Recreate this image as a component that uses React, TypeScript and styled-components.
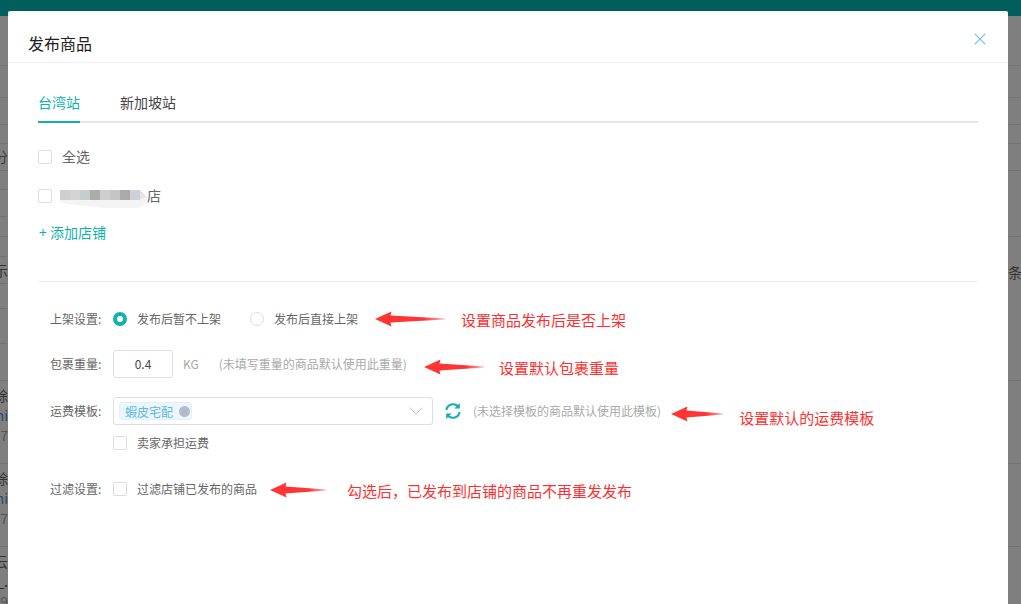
import React from "react";
import styled, { createGlobalStyle } from "styled-components";
import { X, ChevronDown } from "lucide-react";

const CJK = `"Noto Sans CJK SC", "Noto Sans", sans-serif`;
const TEAL = "#10b2ac";

const GlobalStyle = createGlobalStyle`
  html, body {
    margin: 0;
    padding: 0;
    height: 100%;
    overflow: hidden;
    background: #7f7f7f;
    font-family: ${CJK};
  }
`;

const Page = styled.div`
  position: relative;
  width: 1021px;
  height: 604px;
  overflow: hidden;
`;

const TopBar = styled.div`
  height: 16px;
  background: #005e5c;
`;

const BackRow = styled.div<{ $h: number; $leftOnly?: boolean }>`
  height: ${({ $h }) => $h}px;
  box-sizing: border-box;
  border-bottom: 1px solid #737373;
  ${({ $leftOnly }) =>
    $leftOnly
      ? "border-image: linear-gradient(to right, #737373 8px, transparent 8px) 1;"
      : ""}
  display: flex;
  justify-content: space-between;
  align-items: center;
`;

const SideLeft = styled.div<{ $lift?: number }>`
  width: 8px;
  overflow: hidden;
  display: flex;
  flex-direction: column;
  align-items: flex-end;
  margin-bottom: ${({ $lift }) => $lift || 0}px;
  font-size: 14px;
  line-height: 20px;
  color: #333;
`;

const SideRight = styled.div`
  width: 13px;
  overflow: hidden;
  margin-top: 4px;
  font-size: 14px;
  line-height: 20px;
  color: #333;
  white-space: nowrap;
`;

const SideLine = styled.span<{ $tone?: string }>`
  white-space: nowrap;
  color: ${({ $tone }) => $tone || "#333"};
`;

const Modal = styled.div`
  position: absolute;
  left: 8px;
  top: 11px;
  width: 1000px;
  height: 620px;
  background: #fff;
  border-radius: 2px;
`;

const ModalHeader = styled.div`
  height: 52px;
  box-sizing: border-box;
  border-bottom: 1px solid #eeeef4;
  padding: 12px 20px 0;
  display: flex;
  align-items: center;
  justify-content: space-between;
  font-size: 16px;
  color: #222;
`;

const CloseBtn = styled.div`
  display: flex;
  margin: -8px -2px 0 0;
  color: #7cc4ee;
`;

const ModalBody = styled.div`
  padding: 22px 30px 0;
`;

const Tabs = styled.div`
  display: flex;
  gap: 40px;
  height: 38px;
  box-sizing: border-box;
  border-bottom: 2px solid #e6e6ee;
`;

const Tab = styled.div<{ $active?: boolean }>`
  height: 38px;
  box-sizing: border-box;
  padding-top: 6px;
  font-size: 14px;
  line-height: 22px;
  color: ${({ $active }) => ($active ? TEAL : "#444")};
  border-bottom: 2px solid ${({ $active }) => ($active ? TEAL : "transparent")};
`;

const ShopRow = styled.div<{ $top: number }>`
  display: flex;
  align-items: center;
  height: 14px;
  margin-top: ${({ $top }) => $top}px;
  font-size: 14px;
  color: #666;
`;

const ShopLabel = styled.span`
  margin: -2px 0 0 10px;
`;

const ShopSuffix = styled.span`
  margin-top: -2px;
`;

const Box = styled.span`
  display: block;
  width: 14px;
  height: 14px;
  flex: none;
  box-sizing: border-box;
  border: 1px solid #dddde6;
  border-radius: 2px;
  background: #fff;
`;

const Mosaic = styled.div`
  position: relative;
  display: flex;
  width: 88px;
  height: 14px;
  box-sizing: border-box;
  padding-top: 1px;
  margin-left: 8px;
  margin-right: -1px;
`;

const MosaicCell = styled.span<{ $c: string }>`
  width: 10px;
  height: 10px;
  background: ${({ $c }) => $c};
`;

const Smear = styled.svg`
  position: absolute;
  left: 0;
  top: 1px;
`;

const AddShop = styled.div`
  margin-top: 21px;
  padding-left: 1px;
  font-size: 14px;
  line-height: 16px;
  color: ${TEAL};
`;

const Divider = styled.div`
  height: 1px;
  background: #eeeef2;
  margin-top: 41px;
`;

const Form = styled.div`
  padding: 23px 0 0 12px;
`;

const FormRow = styled.div<{ $gap?: number }>`
  display: flex;
  align-items: center;
  height: 28px;
  margin-top: ${({ $gap }) => $gap || 0}px;
  font-size: 12px;
  color: #666;
  white-space: nowrap;
`;

const FormLabel = styled.div`
  width: 63px;
  flex: none;
  margin-top: -2px;
  color: #666;
`;

const Radio = styled.span<{ $on?: boolean }>`
  display: block;
  width: 14px;
  height: 14px;
  flex: none;
  box-sizing: border-box;
  border-radius: 50%;
  border: ${({ $on }) => ($on ? `4.5px solid ${TEAL}` : "1px solid #dddde6")};
  background: #fff;
`;

const OptionText = styled.span<{ $after?: number }>`
  margin-left: 10px;
  margin-top: -2px;
  margin-right: ${({ $after }) => $after || 0}px;
`;

const NumberInput = styled.div`
  width: 60px;
  height: 28px;
  box-sizing: border-box;
  padding-bottom: 2px;
  border: 1px solid #dddde6;
  border-radius: 3px;
  display: flex;
  align-items: center;
  justify-content: center;
  color: #444;
  font-size: 12px;
`;

const Unit = styled.span`
  margin: -2px 0 0 10px;
  color: #a8a8a8;
`;

const Hint = styled.span<{ $left: number }>`
  margin-left: ${({ $left }) => $left}px;
  margin-top: -2px;
  color: #aaa;
`;

const Select = styled.div`
  width: 320px;
  height: 28px;
  box-sizing: border-box;
  border: 1px solid #dddde6;
  border-radius: 3px;
  padding: 0 4px 0 5px;
  display: flex;
  align-items: center;
  justify-content: space-between;
`;

const Tag = styled.div`
  height: 18px;
  box-sizing: border-box;
  padding: 0 1px 0 5px;
  display: flex;
  align-items: center;
  gap: 6px;
  border: 1px solid #dff1f9;
  border-radius: 3px;
  background: #ecf7fc;
  color: #5cb6e4;
`;

const TagClose = styled.span`
  width: 11px;
  height: 11px;
  border-radius: 50%;
  background: #b8bbc6;
  color: #7fb4d8;
  display: flex;
  align-items: center;
  justify-content: center;
`;

const Chevron = styled.span`
  display: flex;
  color: #c2c5d0;
`;

const Refresh = styled.svg`
  margin-left: 11px;
  flex: none;
  color: #12aeb4;
`;

const Note = styled.div<{ $left: number; $drop?: number }>`
  display: flex;
  align-items: center;
  margin-left: ${({ $left }) => $left}px;
  margin-top: ${({ $drop }) => $drop || 0}px;
  color: #ff2f2f;
  font-size: 15px;
`;

const NoteText = styled.span<{ $left: number; $drop?: number }>`
  margin-left: ${({ $left }) => $left}px;
  margin-top: ${({ $drop }) => $drop || 0}px;
`;

const Arrow = ({ w, id }: { w: number; id: string }) => (
  <svg width={w} height={16} viewBox={`0 0 ${w} 16`}>
    <defs>
      <linearGradient id={id} x1="0" x2="1" y1="0" y2="0">
        <stop offset="0" stopColor="#ff3535" />
        <stop offset="0.7" stopColor="#ff3535" />
        <stop offset="1" stopColor="#ff3535" stopOpacity="0.35" />
      </linearGradient>
    </defs>
    <path
      d={`M0 8 L16.5 0.5 L15.5 4.6 L${w} 7.4 V8.6 L15.5 11.4 L16.5 15.5 Z`}
      fill={`url(#${id})`}
    />
  </svg>
);

const backRows: {
  h: number;
  lift?: number;
  leftOnly?: boolean;
  left?: [string, string?][];
  right?: string;
}[] = [
  { h: 50 },
  { h: 32 },
  { h: 27 },
  { h: 19 },
  { h: 27, lift: 2, left: [["分", "#3c3c3c"]] },
  { h: 19, leftOnly: true },
  { h: 27, leftOnly: true },
  { h: 20 },
  { h: 20, leftOnly: true },
  { h: 27, leftOnly: true, left: [["示", "#333"]], right: "条" },
  { h: 25, leftOnly: true },
  { h: 35, leftOnly: true },
  { h: 37 },
  { h: 83, lift: 14, left: [["除"], ["mi", "#2d4a66"], ["7", "#555"]] },
  { h: 83, lift: 14, left: [["除"], ["mi", "#2d4a66"], ["7", "#555"]] },
  { h: 83, lift: 14, left: [["云"], ["_.", "#222"], ["9", "#555"]] },
];

const mosaic = ["#cfcfcf", "#d4d4d4", "#c8cbd0", "#acacac", "#cdcecd", "#c4c5c5", "#aaaaaa", "#cbd1d6"];

export default function App() {
  return (
    <Page>
      <GlobalStyle />
      <TopBar />
      {backRows.map((row, i) => (
        <BackRow key={i} $h={row.h} $leftOnly={row.leftOnly}>
          <SideLeft $lift={row.lift}>
            {row.left?.map(([text, tone], j) => (
              <SideLine key={j} $tone={tone}>
                {text}
              </SideLine>
            ))}
          </SideLeft>
          <SideRight>{row.right}</SideRight>
        </BackRow>
      ))}

      <Modal>
        <ModalHeader>
          发布商品
          <CloseBtn>
            <X size={20} strokeWidth={1.3} />
          </CloseBtn>
        </ModalHeader>
        <ModalBody>
          <Tabs>
            <Tab $active>台湾站</Tab>
            <Tab>新加坡站</Tab>
          </Tabs>
          <ShopRow $top={27}>
            <Box />
            <ShopLabel>全选</ShopLabel>
          </ShopRow>
          <ShopRow $top={25}>
            <Box />
            <Mosaic>
              {mosaic.map((c, i) => (
                <MosaicCell key={i} $c={c} />
              ))}
              <Smear width="88" height="18" viewBox="0 0 88 18">
                <path d="M80 0 L87 7 L80 10 Z" fill="#e4e4e4" />
                <path d="M0 10 H80 L87 8 Q86 16 78 18 Q40 19 28 16 Q10 15 0 12 Z" fill="#f4f4f4" />
              </Smear>
            </Mosaic>
            <ShopSuffix>店</ShopSuffix>
          </ShopRow>
          <AddShop>+ 添加店铺</AddShop>
          <Divider />
          <Form>
            <FormRow>
              <FormLabel>上架设置:</FormLabel>
              <Radio $on />
              <OptionText $after={29}>发布后暂不上架</OptionText>
              <Radio />
              <OptionText>发布后直接上架</OptionText>
              <Note $left={17}>
                <Arrow w={70} id="a1" />
                <NoteText $left={16}>设置商品发布后是否上架</NoteText>
              </Note>
            </FormRow>
            <FormRow $gap={17}>
              <FormLabel>包裹重量:</FormLabel>
              <NumberInput>0.4</NumberInput>
              <Unit>KG</Unit>
              <Hint $left={20}>(未填写重量的商品默认使用此重量)</Hint>
              <Note $left={17} $drop={6}>
                <Arrow w={60} id="a2" />
                <NoteText $left={15}>设置默认包裹重量</NoteText>
              </Note>
            </FormRow>
            <FormRow $gap={19}>
              <FormLabel>运费模板:</FormLabel>
              <Select>
                <Tag>
                  蝦皮宅配
                  <TagClose>
                    <X size={9} strokeWidth={1.5} />
                  </TagClose>
                </Tag>
                <Chevron>
                  <ChevronDown size={24} strokeWidth={1} />
                </Chevron>
              </Select>
              <Refresh width="18" height="18" viewBox="0 0 18 18" fill="none">
                <path d="M2.4 8 A6.8 6.8 0 0 1 14 4.3" stroke="currentColor" strokeWidth="2" />
                <path d="M15.8 1 V6.6 H10.4 Z" fill="currentColor" />
                <path d="M15.6 10 A6.8 6.8 0 0 1 4 13.7" stroke="currentColor" strokeWidth="2" />
                <path d="M2.2 17 V11.4 H7.6 Z" fill="currentColor" />
              </Refresh>
              <Hint $left={11}>(未选择模板的商品默认使用此模板)</Hint>
              <Note $left={10} $drop={6}>
                <Arrow w={52} id="a3" />
                <NoteText $left={16} $drop={6}>设置默认的运费模板</NoteText>
              </Note>
            </FormRow>
            <FormRow $gap={4}>
              <FormLabel />
              <Box />
              <OptionText>卖家承担运费</OptionText>
            </FormRow>
            <FormRow $gap={18}>
              <FormLabel>过滤设置:</FormLabel>
              <Box />
              <OptionText>过滤店铺已发布的商品</OptionText>
              <Note $left={13} $drop={2}>
                <Arrow w={56} id="a4" />
                <NoteText $left={21}>{"勾选后\uFF0C已发布到店铺的商品不再重发发布"}</NoteText>
              </Note>
            </FormRow>
          </Form>
        </ModalBody>
      </Modal>
    </Page>
  );
}
